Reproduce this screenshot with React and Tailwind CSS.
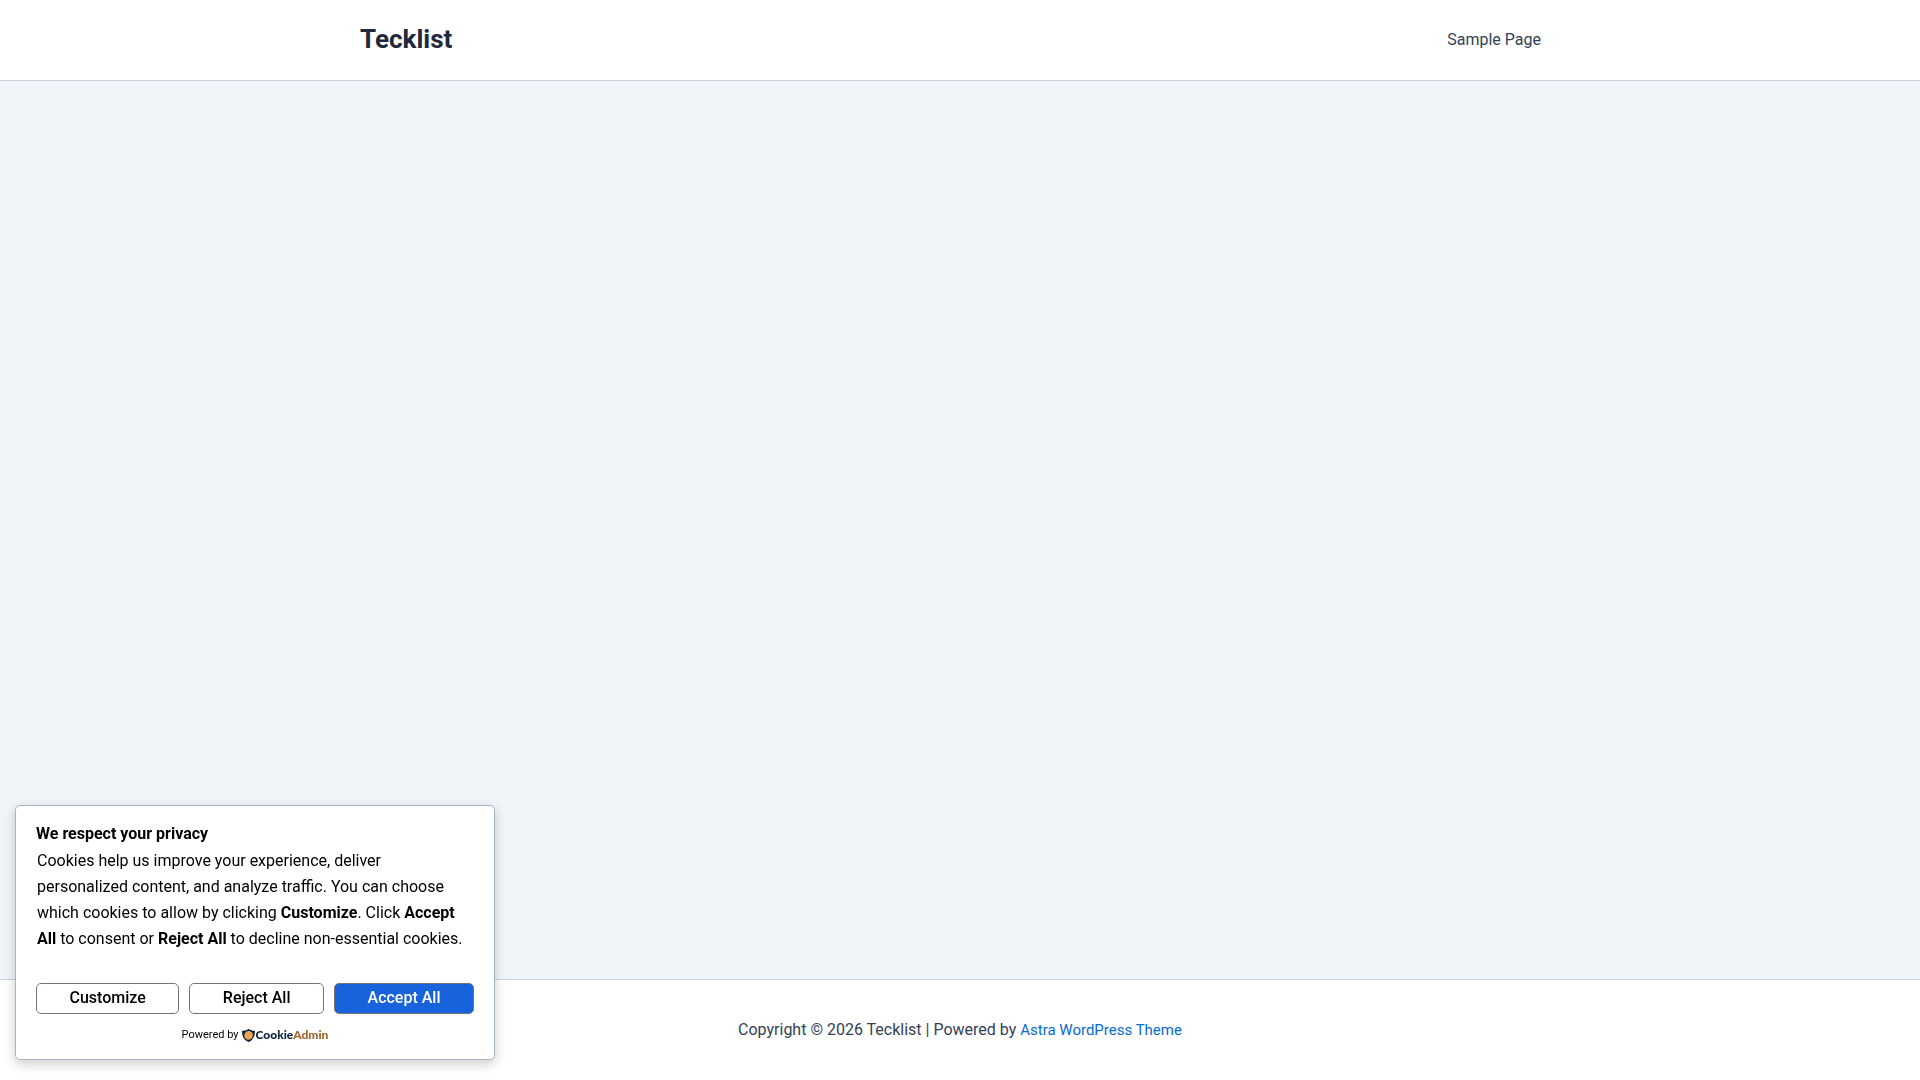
function ShieldLogo() {
  return (
    <svg viewBox="0 0 13 13" className="size-[13px]" aria-hidden="true">
      <path
        d="M6.5 0 C8.4 1.3 10.6 1.8 12.9 1.8 C13.2 7.2 11.3 11 6.5 13 C1.7 11 -0.2 7.2 0.1 1.8 C2.4 1.8 4.6 1.3 6.5 0 Z"
        fill="#0a2340"
      />
      <path
        d="M6 2 L8 2.1 L8.8 3.1 L10.4 3.6 L10.8 5.8 C11 8.8 9 10.7 6.6 10.7 C4.1 10.7 2.3 8.8 2.3 6.4 C2.3 4 4.1 2.3 6 2 Z"
        fill="#eda94e"
      />
      <circle cx="5" cy="5.1" r="0.5" fill="#c98436" />
      <circle cx="7.9" cy="5.6" r="0.5" fill="#c98436" />
      <circle cx="6" cy="8.3" r="0.5" fill="#c98436" />
    </svg>
  );
}

function CookieNotice() {
  const buttonClass =
    "h-[31px] flex-auto rounded-[5px] border border-[#767676] pb-px text-base leading-6 font-medium cursor-pointer";

  return (
    <section
      aria-labelledby="cookie-title"
      className="fixed bottom-5 left-[15px] w-[480px] max-w-[calc(100%-30px)] rounded-[5px] border border-[#a8b5c4] bg-white px-5 pt-[15px] pb-4 text-black shadow-[0_4px_12px_rgba(0,0,0,0.2)]"
    >
      <h2 id="cookie-title" className="mb-px text-base leading-[26px] font-bold">
        We respect your privacy
      </h2>
      <p className="px-px text-base leading-[26px]">
        Cookies help us improve your experience, deliver personalized content,
        and analyze traffic. You can choose which cookies to allow by clicking{" "}
        <strong>Customize</strong>. Click <strong>Accept All</strong> to consent
        or <strong>Reject All</strong> to decline non-essential cookies.
      </p>

      <div className="mt-[31px] flex gap-[10px]">
        <button type="button" className={`${buttonClass} bg-white`}>
          Customize
        </button>
        <button type="button" className={`${buttonClass} bg-white`}>
          Reject All
        </button>
        <button type="button" className={`${buttonClass} bg-[#1863dc] text-white`}>
          Accept All
        </button>
      </div>

      <div className="mt-[13px] flex items-center justify-center gap-[3px] text-[11px] leading-4">
        <span>Powered by</span>
        <a href="#cookieadmin" className="flex items-center gap-px">
          <ShieldLogo />
          <span className="font-[Lato,sans-serif] text-[12px] leading-4 font-black text-[#0a2340]">
            Cookie<span className="text-[#a3632a]">Admin</span>
          </span>
        </a>
      </div>
    </section>
  );
}

export default function App() {
  return (
    <div className="flex min-h-screen flex-col bg-[#f0f5fa] font-[Roboto,sans-serif] text-[#334155]">
      <header className="border-b border-[#cdd2da] bg-white">
        <div className="mx-auto flex h-20 max-w-[1240px] items-center justify-between px-5">
          <a href="#home" className="pb-0.5 text-[26px] leading-8 font-bold text-[#1e293b]">
            Tecklist
          </a>
          <nav className="pr-[19px]">
            <a href="#sample-page" className="text-base">
              Sample Page
            </a>
          </nav>
        </div>
      </header>

      <main className="flex-1" />

      <footer className="border-t border-[#cdd2da] bg-white px-5 py-[37px] text-center">
        <p className="text-base leading-[26px]">
          Copyright © 2026 Tecklist | Powered by{" "}
          <a href="#astra" className="text-[15px] text-[#046bd2]">
            Astra WordPress Theme
          </a>
        </p>
      </footer>

      <CookieNotice />
    </div>
  );
}
